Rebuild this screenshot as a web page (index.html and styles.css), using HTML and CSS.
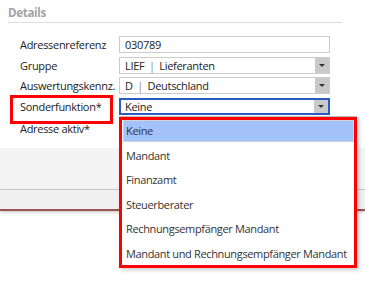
FILE: index.html
```html
<!DOCTYPE html>
<html lang="de">
<head>
  <meta charset="UTF-8">
  <meta name="viewport" content="width=device-width, initial-scale=1.0">
  <title>Details</title>
  <link rel="stylesheet" href="styles.css">
</head>
<body>
  <div class="page">
    <section class="details">
      <h2 class="details-title">Details</h2>

      <div class="form">
        <div class="label">Adressenreferenz</div>
        <div class="field">
          <div class="input">030789</div>
        </div>

        <div class="label">Gruppe</div>
        <div class="field">
          <div class="input select">
            <span class="value">LIEF <span class="sep">|</span> Lieferanten</span>
            <span class="arrow"></span>
          </div>
        </div>

        <div class="label">Auswertungskennz.</div>
        <div class="field">
          <div class="input select">
            <span class="value">D <span class="sep">|</span> Deutschland</span>
            <span class="arrow"></span>
          </div>
        </div>

        <div class="label marked">Sonderfunktion*</div>
        <div class="field">
          <div class="input select focused">
            <span class="value">Keine</span>
            <span class="arrow"></span>
          </div>

          <!-- open list of the focused select -->
          <ul class="dropdown">
            <li class="option active">Keine</li>
            <li class="option">Mandant</li>
            <li class="option">Finanzamt</li>
            <li class="option">Steuerberater</li>
            <li class="option">Rechnungsempfänger Mandant</li>
            <li class="option">Mandant und Rechnungsempfänger Mandant</li>
          </ul>
        </div>

        <div class="label last">Adresse aktiv*</div>
        <div class="field last"></div>
      </div>
    </section>

    <div class="lower-area"></div>
    <div class="toolbar"></div>
  </div>
</body>
</html>
```

FILE: styles.css
```css
:root {
  --text-color: #222222;
  --muted-text: #a3a3a3;
  --border-color: #cccccc;
  --arrow-bg: #c9c9c9;
  --focus-color: #2a5bc4;
  --mark-color: #ff0000;
  --highlight: #a4c2fc;
}

* {
  margin: 0;
  padding: 0;
  box-sizing: border-box;
}

body {
  background-color: #ffffff;
  color: var(--text-color);
  font-family: 'Open Sans', 'Noto Sans', sans-serif;
  font-size: 11px;
  letter-spacing: -0.3px;
}

.page {
  width: 365px;
  height: 293px;
  overflow: hidden;
}

.details {
  padding: 4px 23px 11px 8px;
}

.details-title {
  font-size: 11.5px;
  font-weight: 700;
  color: var(--muted-text);
  line-height: 17px;
  padding-bottom: 1px;
  border-bottom: 1px solid #dddddd;
}

.form {
  display: grid;
  grid-template-columns: 99px 211px;
  row-gap: 3.5px;
  margin-top: 13px;
  padding-left: 12px;
}

.label {
  height: 17px;
  line-height: 17px;
  white-space: nowrap;
}

.label.last,
.field.last {
  margin-top: 2px;
}

.label.marked {
  position: relative;
}

/* red annotation frame around the label */
.label.marked::after {
  content: "";
  position: absolute;
  left: -10px;
  top: -3px;
  width: 97px;
  height: 23.5px;
  border: 3px solid var(--mark-color);
}

.field {
  position: relative;
  height: 17px;
}

.input {
  height: 17px;
  line-height: 15px;
  padding-left: 5px;
  border: 1px solid var(--border-color);
  background-color: #ffffff;
  white-space: nowrap;
}

.select {
  display: flex;
  padding-left: 0;
}

.select .value {
  flex: 1;
  padding-left: 5px;
}

.sep {
  color: #8a8a8a;
  padding: 0 2px;
}

.arrow {
  width: 14px;
  background-color: var(--arrow-bg);
  display: flex;
  align-items: center;
  justify-content: center;
}

.arrow::before {
  content: "";
  border-left: 3.5px solid transparent;
  border-right: 3.5px solid transparent;
  border-top: 3.5px solid #333333;
}

.select.focused {
  border: 2px solid var(--focus-color);
  line-height: 13px;
}

.select.focused .value {
  padding-left: 4px;
}

.dropdown {
  list-style: none;
  position: absolute;
  left: 0;
  top: 19.5px;
  width: 238px;
  padding: 1px 1px 1px 2px;
  display: flex;
  flex-direction: column;
  gap: 4.6px;
  background-color: #ffffff;
  border: 3px solid var(--mark-color);
  box-shadow: 0 -1px 0 #bdbdbd, 2px 2px 4px rgba(0, 0, 0, 0.2);
  z-index: 2;
}

.option {
  height: 20px;
  line-height: 20px;
  padding-left: 2px;
  color: #333333;
  white-space: nowrap;
  letter-spacing: -0.35px;
}

.option.active {
  background-color: var(--highlight);
  box-shadow: 0 0 0 1px #d2d2d2;
}

.lower-area {
  height: 42px;
  background-color: #f4f4f4;
  border-bottom: 1px solid #cfcfcf;
}

.toolbar {
  height: 21px;
  background-color: #f0f0f0;
  border-bottom: 2px solid #9a5555;
  box-shadow: 0 1px 3px rgba(0, 0, 0, 0.25);
}
```
